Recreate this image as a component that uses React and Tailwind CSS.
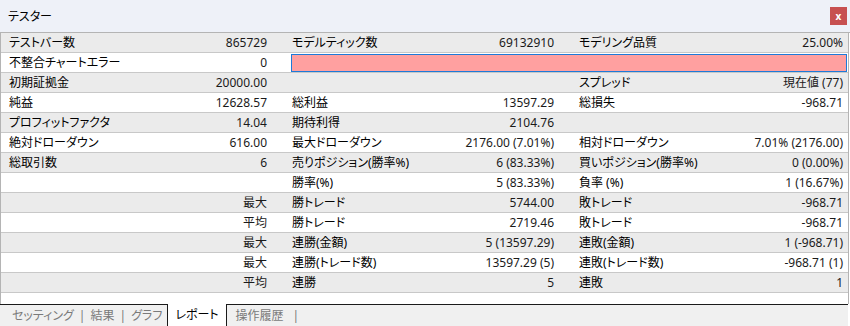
import React from 'react';

const rows = [
  [['テストバー数', '865729'], ['モデルティック数', '69132910'], ['モデリング品質', '25.00%']],
  [['不整合チャートエラー', '0'], 'pink'],
  [['初期証拠金', '20000.00'], ['', ''], ['スプレッド', '現在値 (77)']],
  [['純益', '12628.57'], ['総利益', '13597.29'], ['総損失', '-968.71']],
  [['プロフィットファクタ', '14.04'], ['期待利得', '2104.76'], ['', '']],
  [['絶対ドローダウン', '616.00'], ['最大ドローダウン', '2176.00 (7.01%)'], ['相対ドローダウン', '7.01% (2176.00)']],
  [['総取引数', '6'], ['売りポジション(勝率%)', '6 (83.33%)'], ['買いポジション(勝率%)', '0 (0.00%)']],
  [['', ''], ['勝率(%)', '5 (83.33%)'], ['負率 (%)', '1 (16.67%)']],
  [['', '最大'], ['勝トレード', '5744.00'], ['敗トレード', '-968.71']],
  [['', '平均'], ['勝トレード', '2719.46'], ['敗トレード', '-968.71']],
  [['', '最大'], ['連勝(金額)', '5 (13597.29)'], ['連敗(金額)', '1 (-968.71)']],
  [['', '最大'], ['連勝(トレード数)', '13597.29 (5)'], ['連敗(トレード数)', '-968.71 (1)']],
  [['', '平均'], ['連勝', '5'], ['連敗', '1']],
];

function Cell({ label, value, last }) {
  return (
    <div className={`flex items-center justify-between pl-2 ${last ? 'pr-[5px]' : 'pr-[17px]'}`}>
      <span>{label}</span>
      <span className="text-[#1a1a1a]">{value}</span>
    </div>
  );
}

export default function App() {
  return (
    <div
      className="w-[850px] h-[326px] bg-white text-[12px] leading-none text-black overflow-hidden flex flex-col whitespace-nowrap [font-feature-settings:'palt']"
      style={{ fontFamily: '"Noto Sans", "Noto Sans CJK JP", sans-serif' }}
    >
      {/* Title bar */}
      <div className="h-[33px] shrink-0 bg-[#eef1f8] flex items-center justify-between pl-2 pr-[3px] border-b border-[#b4b4b4]">
        <span className="text-[12px] pt-px">テスター</span>
        <button className="w-[17px] h-[18px] mb-[1px] bg-[#c75050] text-white text-[10px] font-bold flex items-center justify-center">
          x
        </button>
      </div>

      {/* Report grid */}
      <div className="flex-1 flex flex-col border-l border-r border-[#b4b4b4] mr-[1px]">
        {rows.map((row, i) => (
          <div
            key={i}
            className={`grid grid-cols-[283px_287px_1fr] h-[20px] shrink-0 pt-px border-b border-[#c8c8c8] ${
              i % 2 === 0 ? 'bg-[#ebebeb]' : 'bg-white'
            }`}
          >
            <Cell label={row[0][0]} value={row[0][1]} />
            {row[1] === 'pink' ? (
              <div className="col-span-2 flex items-center pl-[7px] pr-[1px] -mt-px">
                <div className="w-full h-[18px] bg-[#ffa0a0] border border-[#1e7ad8]" />
              </div>
            ) : (
              <>
                <Cell label={row[1][0]} value={row[1][1]} />
                <Cell label={row[2][0]} value={row[2][1]} last />
              </>
            )}
          </div>
        ))}
        <div className="flex-1" />
      </div>

      {/* Tabs */}
      <div className="h-[22px] shrink-0 bg-[#f0f0f0] border-t border-[#1a1a1a] mr-[2px] flex items-center pl-[12px] text-[#7a7a7a]">
        <span>セッティング</span>
        <span className="mx-[5px]">|</span>
        <span>結果</span>
        <span className="mx-[5px]">|</span>
        <span>グラフ</span>
        <div className="ml-[5px] -mt-px h-[22px] bg-white border-l border-r border-[#1a1a1a] text-black flex items-center px-[7px]">
          レポート
        </div>
        <span className="ml-[9px]">操作履歴</span>
        <span className="ml-[9px]">|</span>
      </div>
    </div>
  );
}
